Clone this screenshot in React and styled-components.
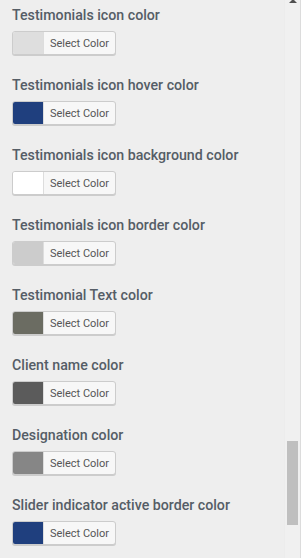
import React from 'react'
import styled, { createGlobalStyle } from 'styled-components'

const GlobalStyle = createGlobalStyle`
  html, body {
    margin: 0;
    padding: 0;
    background: #eeeeee;
    overflow: hidden;
  }
  body {
    font-family: Roboto, "Noto Sans", sans-serif;
  }
`

const Frame = styled.div`
  display: flex;
  width: 301px;
  height: 558px;
  background: #eeeeee;
  overflow: hidden;
`

const Panel = styled.div`
  flex: 1;
  display: flex;
  flex-direction: column;
  padding: 6px 0 0 12px;
`

const Field = styled.div`
  flex-shrink: 0;
  height: 70px;
  display: flex;
  flex-direction: column;
`

const Label = styled.div`
  font-size: 14.2px;
  line-height: 18px;
  font-weight: 500;
  color: #555d66;
  margin-bottom: 7px;
`

const ColorButton = styled.button`
  display: flex;
  align-items: stretch;
  width: 104px;
  height: 24px;
  padding: 0;
  border: 1px solid #cccccc;
  border-radius: 3px;
  background: #f7f7f7;
  box-shadow: 0 1px 0 #cccccc;
  overflow: hidden;
  cursor: pointer;
`

const Swatch = styled.span`
  width: 30px;
  background: ${p => p.color};
  border-right: 1px solid #dddddd;
`

const ButtonText = styled.span`
  flex: 1;
  display: flex;
  align-items: center;
  justify-content: center;
  font-family: Roboto, "Noto Sans", sans-serif;
  font-size: 11px;
  color: #555555;
`

const Scrollbar = styled.div`
  flex-shrink: 0;
  width: 15px;
  border-left: 1px solid #ececec;
  border-right: 1px solid #dcdcdc;
  background: #f0f0f0;
  display: flex;
  flex-direction: column;
  align-items: center;
`

const Arrow = styled.div`
  width: 0;
  height: 0;
  margin-top: -1px;
  border-left: 4px solid transparent;
  border-right: 4px solid transparent;
  border-bottom: 4px solid #505050;
`

const Thumb = styled.div`
  width: 11px;
  height: 84px;
  margin-top: 438px;
  background: #bfbfbf;
`

const fields = [
  { label: 'Testimonials icon color', color: '#dedede' },
  { label: 'Testimonials icon hover color', color: '#1f3f7e' },
  { label: 'Testimonials icon background color', color: '#ffffff' },
  { label: 'Testimonials icon border color', color: '#cccccc' },
  { label: 'Testimonial Text color', color: '#6b6c62' },
  { label: 'Client name color', color: '#5b5b5b' },
  { label: 'Designation color', color: '#868686' },
  { label: 'Slider indicator active border color', color: '#1f3f7e' },
]

const App = () => (
  <Frame>
    <GlobalStyle />
    <Panel>
      {fields.map(f => (
        <Field key={f.label}>
          <Label>{f.label}</Label>
          <ColorButton>
            <Swatch color={f.color} />
            <ButtonText>Select Color</ButtonText>
          </ColorButton>
        </Field>
      ))}
    </Panel>
    <Scrollbar>
      <Arrow />
      <Thumb />
    </Scrollbar>
  </Frame>
)

export default App
